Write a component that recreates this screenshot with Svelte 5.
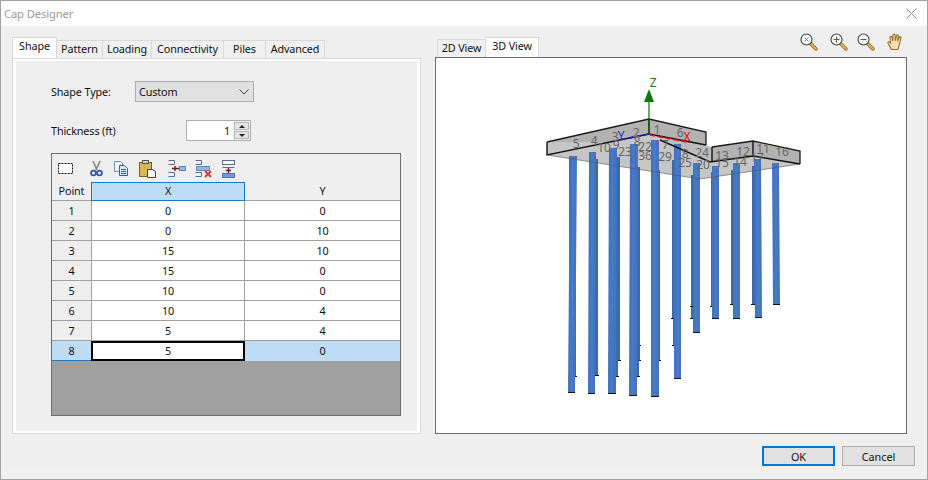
<script>
	const tabs = [
		{ name: 'Shape', w: 45, active: true },
		{ name: 'Pattern', w: 47 },
		{ name: 'Loading', w: 50 },
		{ name: 'Connectivity', w: 73 },
		{ name: 'Piles', w: 43 },
		{ name: 'Advanced', w: 60 }
	];
	const points = [
		[0, 0],
		[0, 10],
		[15, 10],
		[15, 0],
		[10, 0],
		[10, 4],
		[5, 4],
		[5, 0]
	];

	// x, top, bottom, width in screen px; back row first so the front row covers it
	const backPiles = [
		[569, 156, 377, 7],
		[595, 159, 376, 3],
		[615, 157, 361, 5],
		[615, 157, 377, 3],
		[637, 167, 346, 3],
		[637, 167, 361, 3],
		[637, 167, 377, 2],
		[659, 170, 361, 1],
		[673, 160, 346, 1],
		[672, 160, 319, 2],
		[691, 175, 319, 2],
		[691, 175, 307, 1],
		[711, 172, 307, 1],
		[731, 170, 305, 2],
		[752, 166, 305, 3]
	];
	// top x, bottom x, top, bottom, width: the piles lean a little in perspective
	const frontPiles = [
		[570, 568, 156, 392, 7],
		[589, 588, 152, 393, 7],
		[609, 608, 148, 393, 8],
		[630, 629, 144, 395, 8],
		[651, 651, 140, 396, 8],
		[674, 674, 144, 378, 7],
		[693, 693, 163, 332, 7],
		[712, 712, 166, 318, 7],
		[733, 733, 163, 318, 7],
		[754, 755, 159, 317, 7],
		[772, 773, 163, 304, 7]
	];
	const labels = [
		[576, 148, '5'], [594, 145, '4'], [615, 141, '3'], [636, 137, '2'], [657, 134, '1'], [680, 137, '6'],
		[604, 152, '10'], [616, 149, '9'], [625, 156, '23'], [645, 151, '22'], [637, 146, '8'], [645, 160, '36'],
		[665, 149, '7'], [665, 161, '29'], [685, 158, '8'], [685, 167, '25'], [702, 157, '24'], [703, 169, '20'],
		[722, 160, '13'], [722, 167, '15'], [743, 156, '12'], [740, 166, '14'], [763, 153, '11'], [782, 156, '16'], [757, 162, '17']
	];
</script>

<div class="window">
	<header class="title">
		<span>Cap Designer</span>
		<svg class="close" width="11" height="11" viewBox="0 0 11 11">
			<path d="M.5.5l10 10M10.5.5l-10 10" stroke="#8c8c8c" fill="none" />
		</svg>
	</header>

	<div class="body">
		<div class="main">
			<section class="left">
				<div class="tabs">
					{#each tabs as tab}
						<div class="tab" class:active={tab.active} style="width:{tab.w}px">{tab.name}</div>
					{/each}
				</div>
				<div class="tabpanel">
					<div class="inner">
						<div class="field shape">
							<span class="lbl">Shape Type:</span>
							<div class="select">
								<span>Custom</span>
								<svg width="10" height="6" viewBox="0 0 10 6">
									<path d="M.5.5L5 5 9.5.5" stroke="#444" fill="none" />
								</svg>
							</div>
						</div>
						<div class="field thick">
							<span class="lbl">Thickness (ft)</span>
							<div class="spin">
								<div class="spinval">1</div>
								<div class="arrows">
									<div class="arrow"><i class="up"></i></div>
									<div class="arrow"><i class="down"></i></div>
								</div>
							</div>
						</div>

						<div class="grid-box">
							<div class="toolbar">
								<svg width="186" height="20" viewBox="0 0 186 20">
									<!-- select -->
									<rect x="6.5" y="4.5" width="14" height="10" fill="#fff" stroke="#111" stroke-dasharray="2 1" />
									<!-- scissors -->
									<path d="M41 2l4 9M48 2l-4 9" stroke="#8a8f96" stroke-width="1.8" fill="none" />
									<circle cx="41.5" cy="14" r="2.4" fill="none" stroke="#3358a8" stroke-width="1.8" />
									<circle cx="47.5" cy="14" r="2.4" fill="none" stroke="#3358a8" stroke-width="1.8" />
									<!-- copy -->
									<path d="M62.5 2.5h6l2 2v8h-8z" fill="#eef3fb" stroke="#6f8db8" />
									<path d="M67.5 6.5h5l3 3v7h-8z" fill="#dbe6f6" stroke="#3c5f9a" />
									<path d="M69 10.5h5M69 12.5h5M69 14.5h5" stroke="#3c5f9a" />
									<!-- paste -->
									<rect x="87.5" y="3.5" width="12" height="14" fill="#dcb45a" stroke="#7d5c1c" />
									<rect x="90.5" y="1.5" width="6" height="3" fill="#cfcfcf" stroke="#555" />
									<path d="M95.5 10.5h5l3 2v6h-8z" fill="#f6f6f6" stroke="#444" />
									<!-- insert row -->
									<path d="M116.5 1.5h6v4h-6M116.5 13.5h6v4h-6" fill="none" stroke="#5a6f8e" />
									<rect x="127.5" y="7.5" width="6" height="4" fill="#8fb6e6" stroke="#5f87bd" />
									<path d="M120 9.5h7M123 7v5" stroke="#7a1010" stroke-width="1.4" fill="none" />
									<!-- delete row -->
									<path d="M143.5 1.5h6v4h-6M143.5 13.5h6v4h-6" fill="none" stroke="#5a6f8e" />
									<rect x="144.5" y="7.5" width="13" height="4" fill="#8fb6e6" stroke="#5f87bd" />
									<path d="M153 12l6 6M159 12l-6 6" stroke="#e5352b" stroke-width="2" fill="none" />
									<!-- add row -->
									<rect x="170.5" y="1.5" width="12" height="4" fill="#f4f7fb" stroke="#5a6f8e" />
									<path d="M170.5 8.5h12" stroke="#5a6f8e" />
									<rect x="170.5" y="14.5" width="12" height="4" fill="#6d9bd9" stroke="#4874b2" />
									<path d="M176.5 9v5M174 11.5h5" stroke="#7a1010" stroke-width="1.4" fill="none" />
								</svg>
							</div>
							<div class="row head">
								<div class="cell rowh">Point</div>
								<div class="cell colh sel">X</div>
								<div class="cell colh">Y</div>
							</div>
							{#each points as p, i}
								<div class="row" class:last={i === 7}>
									<div class="cell rowh">{i + 1}</div>
									<div class="cell" class:current={i === 7}>{p[0]}</div>
									<div class="cell">{p[1]}</div>
								</div>
							{/each}
							<div class="empty"></div>
						</div>
					</div>
				</div>
			</section>

			<section class="right">
				<div class="view-head">
					<div class="tabs views">
						<div class="tab" style="width:49px">2D View</div>
						<div class="tab active" style="width:54px">3D View</div>
					</div>
					<div class="view-tools">
						{#each ['x', '+', '-'] as kind}
							<svg width="18" height="18" viewBox="0 0 18 18">
								<path d="M10.5 10.5l5.5 5.5" stroke="#8a6a2a" stroke-width="3.4" stroke-linecap="round" />
								<path d="M11 11l5 5" stroke="#e6b450" stroke-width="1.8" stroke-linecap="round" />
								<circle cx="6.5" cy="6.5" r="5.5" fill="#f4f8f8" stroke="#3a4540" stroke-width="1.1" />
								{#if kind === 'x'}
									<path d="M4.5 4.5l4 4M8.5 4.5l-4 4" stroke="#9a7a50" fill="none" />
								{:else}
									<path d="M3.5 6.5h6" stroke="#6f5a20" fill="none" />
								{/if}
								{#if kind === '+'}
									<path d="M6.5 3.5v6" stroke="#6f5a20" fill="none" />
								{/if}
							</svg>
						{/each}
						<svg width="18" height="18" viewBox="0 0 18 18">
							<path d="M4.5 16.5C3 13.5 1 11 .8 9.5 1 8.3 2.6 8.6 3.6 10.2L3 4.2c0-1.3 1.6-1.3 1.900 0l.9 3.6L6 2c.2-1.3 1.800-1.300 2 0l.4 5.400L9.600 2.600c.3-1.200 1.900-1 1.800.3l-.8 5 1.800-3.700c.5-1 1.900-.5 1.600.7l-1.500 6c-.4 2-1 3.600-1.600 5.600z" fill="#f6dfb0" stroke="#9a6f2a" stroke-width="1.1" stroke-linejoin="round" />
						</svg>
					</div>
				</div>
				<div class="viewport">
					<svg width="470" height="375" viewBox="436 58 470 375">
						<!-- cap underside -->
						<path d="M547 155L700 179 800 164 753 156 710 162 649 134z" fill="#c6c6c6" />
						<path d="M649 134L706 145 712 147 710 162z" fill="#bcbcbc" />
						{#each backPiles as p}
							<rect x={p[0]} y={p[1]} width={p[3]} height={p[2] - p[1]} fill="#3f68ab" />
							<rect x={p[0] - 1} y={p[2] - 1} width={p[3] + 2} height="1" fill="#111" />
						{/each}
						{#each frontPiles as p}
							<polygon points="{p[0]},{p[2]} {p[0] + p[4]},{p[2]} {p[1] + p[4]},{p[3]} {p[1]},{p[3]}" fill="#4374bd" />
							<polygon points="{p[0] + 2},{p[2]} {p[0] + 5},{p[2]} {p[1] + 5},{p[3]} {p[1] + 2},{p[3]}" fill="#4779c4" />
							<rect x={p[1]} y={p[3]} width={p[4]} height="1" fill="#111" />
						{/each}
						<!-- cap top and sides -->
						<path d="M547 142L649 119 706 132V145L649 134 547 155z" fill="#b2b2b2" />
						<path d="M547 142L614 142 649 134 547 155z" fill="#c6c6c6" />
						<path d="M712 147L753 141 800 151V164L753 156 710 162z" fill="#b2b2b2" />
						<path d="M547 142L649 119 706 132V145M712 147L753 141 800 151V164" fill="none" stroke="#1c1c1c" stroke-width="1.3" />
						<path d="M547 142V155L649 134 706 145M660 140L710 162 753 156 800 164M712 147V162M753 141V156M649 119V134" fill="none" stroke="#111" stroke-width="1.4" />
						<path d="M547 155L700 179 800 164" fill="none" stroke="#555" stroke-width=".6" />
						<!-- axes -->
						<path d="M649 135V100" stroke="#0a6e0a" stroke-width="1.2" />
						<path d="M649 89l-5 13h10z" fill="#0a7a0a" />
						<path d="M649 134l-30 6" stroke="#1c1cc8" stroke-width="1.6" stroke-dasharray="5 3" />
						<path d="M650 135l37 7" stroke="#e01010" stroke-width="1.6" stroke-dasharray="5 3" />
						{#each labels as l}
							<text x={l[0]} y={l[1]} class="num">{l[2]}</text>
						{/each}
						<text x="653" y="87" class="axis" fill="#0a7a0a">Z</text>
						<text x="621" y="140" class="axis" fill="#2a2ac0">Y</text>
						<text x="687" y="141" class="axis" fill="#e01010">X</text>
					</svg>
				</div>
			</section>
		</div>

		<footer class="buttons">
			<button class="btn ok">OK</button>
			<button class="btn">Cancel</button>
		</footer>
	</div>
</div>

<style>
	:global(body) {
		background: #f0f0f0;
	}

	.window {
		border: 1px solid #a0a0a0;
		box-sizing: border-box;
		color: #111;
		font-family: 'Noto Sans', 'Liberation Sans', sans-serif;
		font-size: 10.8px;
		height: 480px;
		letter-spacing: -0.12px;
		width: 928px;
	}

	.title {
		align-items: center;
		background: #fff;
		color: #9a9a9a;
		display: flex;
		font-size: 11.2px;
		height: 25px;
		justify-content: space-between;
		padding: 0 10px 0 3px;
	}

	.body {
		background: #efefef;
		padding-top: 11px;
	}

	.main {
		display: flex;
		gap: 14px;
		height: 397px;
		padding-left: 11px;
	}

	.left {
		display: flex;
		flex-direction: column;
		width: 409px;
	}

	.tabs {
		align-items: flex-end;
		display: flex;
		height: 21px;
	}

	.tab {
		background: #f0f0f0;
		border: 1px solid #d9d9d9;
		border-bottom: none;
		box-sizing: border-box;
		height: 18px;
		line-height: 15px;
		margin-left: -1px;
		text-align: center;
	}

	.tab:first-child {
		margin-left: 0;
	}

	.tab.active {
		background: #fff;
		height: 21px;
		line-height: 16px;
		position: relative;
		z-index: 1;
	}

	.tabpanel {
		background: #fff;
		border: 1px solid #d9d9d9;
		box-sizing: border-box;
		flex: 1;
		padding: 2px 3px;
	}

	.inner {
		background: #efefef;
		box-sizing: border-box;
		height: 100%;
		padding: 20px 0 0 35px;
	}

	.field {
		align-items: center;
		display: flex;
		height: 21px;
	}

	.thick {
		margin-top: 18px;
	}

	.lbl {
		white-space: nowrap;
		width: 84px;
	}

	.thick .lbl {
		width: 135px;
	}

	.select {
		align-items: center;
		background: #e1e1e1;
		border: 1px solid #adadad;
		box-sizing: border-box;
		display: flex;
		height: 21px;
		justify-content: space-between;
		padding: 0 4px 0 3px;
		width: 119px;
	}

	.spin {
		display: flex;
		height: 21px;
	}

	.spinval {
		background: #fff;
		border: 1px solid #adadad;
		border-right: none;
		box-sizing: border-box;
		line-height: 19px;
		padding-right: 3px;
		text-align: right;
		width: 47px;
	}

	.arrows {
		border: 1px solid #adadad;
		border-left: none;
		box-sizing: border-box;
		display: flex;
		flex-direction: column;
		justify-content: space-between;
		padding: 1px;
		width: 18px;
	}

	.arrow {
		align-items: center;
		background: #e4e4e4;
		border: 1px solid #b8b8b8;
		display: flex;
		height: 6px;
		justify-content: center;
	}

	.arrow i {
		border-left: 3px solid transparent;
		border-right: 3px solid transparent;
	}

	.up {
		border-bottom: 3px solid #222;
	}

	.down {
		border-top: 3px solid #222;
	}

	.grid-box {
		background: #efefef;
		border: 1px solid #6e6e6e;
		box-sizing: border-box;
		height: 263px;
		margin-top: 12px;
		width: 350px;
	}

	.toolbar {
		box-sizing: border-box;
		height: 28px;
		padding-top: 5px;
	}

	.row {
		display: grid;
		grid-template-columns: 39px 154px 155px;
		height: 20px;
	}

	.head {
		height: 19px;
	}

	.cell {
		background: #fff;
		border-bottom: 1px solid #a0a0a0;
		border-right: 1px solid #a0a0a0;
		box-sizing: border-box;
		line-height: 18px;
		padding-top: 1px;
		text-align: center;
	}

	.head .cell {
		line-height: 18px;
		padding-top: 0;
	}

	.row .cell:last-child {
		border-right: none;
	}

	.rowh {
		background: #efefef;
		border-right: none;
	}

	.rowh + .cell {
		border-left: 1px solid #a0a0a0;
	}

	.colh {
		background: #efefef;
	}

	.head .colh.sel {
		background: #bfdcf5;
		border: 1px solid #1a78c8;
		line-height: 16px;
	}

	.last .cell {
		background: #bfdcf5;
		border-bottom: none;
		border-right: none;
		line-height: 20px;
		padding-top: 0;
	}

	.last .rowh {
		border-bottom: 1px solid #1a78c8;
		line-height: 19px;
	}

	.last .cell.current {
		background: #fff;
		border: 2px solid #000;
		line-height: 16px;
	}

	.empty {
		background: #a0a0a0;
		height: 54px;
	}

	.right {
		display: flex;
		flex-direction: column;
		width: 472px;
	}

	.view-head {
		display: flex;
		height: 20px;
		justify-content: space-between;
	}

	.views {
		height: 20px;
		padding-left: 2px;
	}

	.views .tab.active {
		height: 20px;
	}

	.view-tools {
		align-items: center;
		display: flex;
		gap: 12px;
		height: 18px;
		margin-top: -4px;
		padding-right: 2px;
	}

	.view-tools svg:nth-child(3) {
		margin-left: -3px;
	}

	.viewport {
		background: #fff;
		border: 1px solid #6e6e6e;
		box-sizing: border-box;
		height: 377px;
		overflow: hidden;
	}

	.viewport svg {
		display: block;
	}

	.num {
		fill: #666;
		font-size: 12px;
		text-anchor: middle;
	}

	.axis {
		font-size: 12px;
		text-anchor: middle;
	}

	.buttons {
		display: flex;
		gap: 7px;
		justify-content: flex-end;
		margin-top: 12px;
		padding-right: 12px;
	}

	.btn {
		background: #e1e1e1;
		border: 1px solid #adadad;
		border-radius: 0;
		color: #111;
		font: inherit;
		height: 20px;
		padding: 0;
		width: 73px;
	}

	.btn.ok {
		border: 2px solid #0078d7;
	}
</style>
